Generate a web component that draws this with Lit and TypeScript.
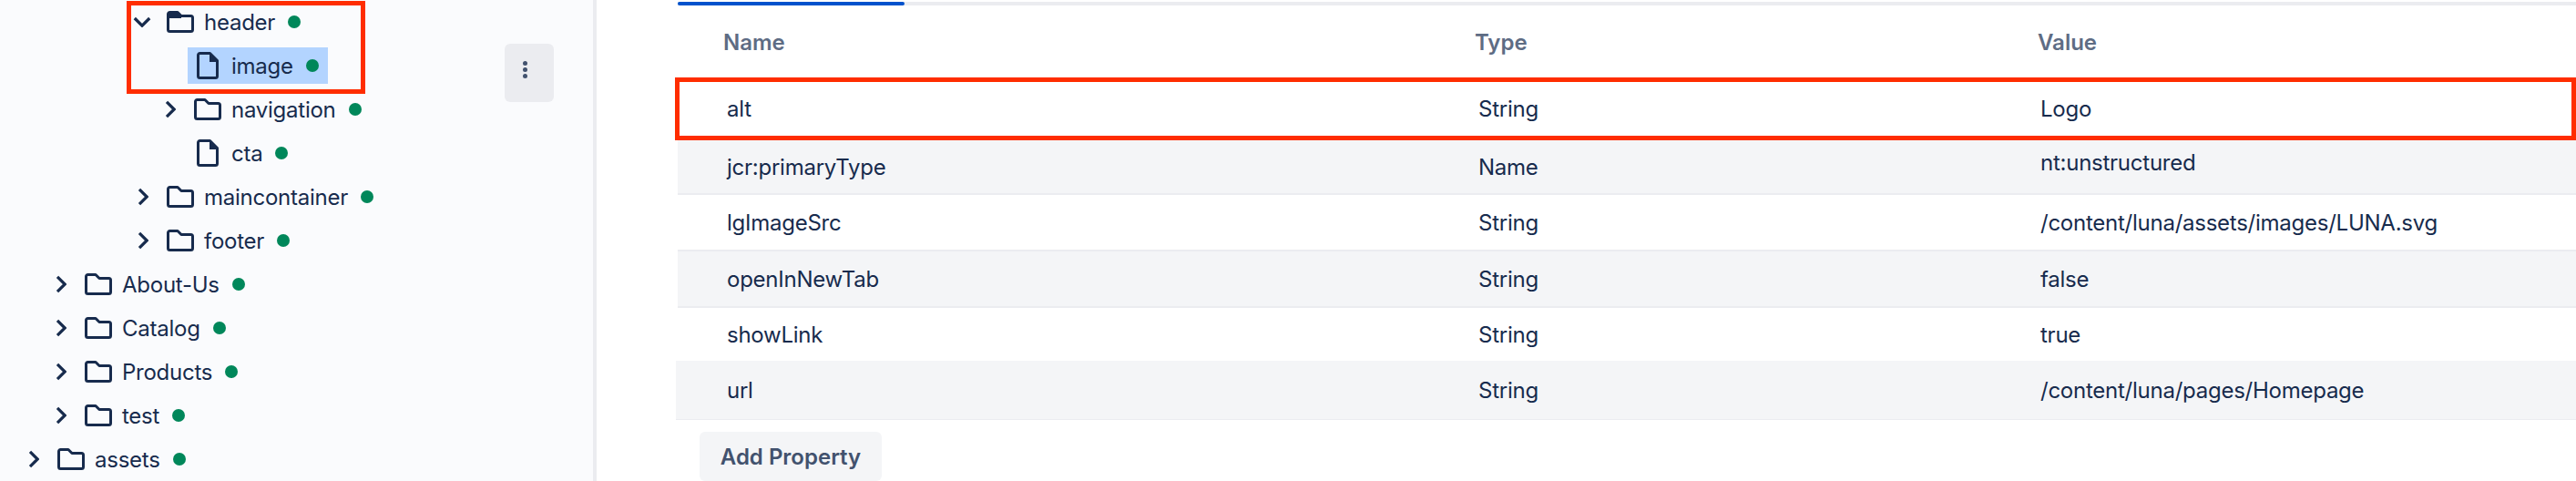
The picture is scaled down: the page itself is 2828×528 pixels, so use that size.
import { css, html, LitElement, svg } from "lit";
import { customElement } from "lit/decorators.js";

interface TreeNode {
	label: string;
	level: number;
	kind: "open" | "closed" | "file";
	selected?: boolean;
}

interface Property {
	name: string;
	type: string;
	value: string;
	raised?: boolean;
}

const TREE: TreeNode[] = [
	{ label: "header", level: 4, kind: "open" },
	{ label: "image", level: 5, kind: "file", selected: true },
	{ label: "navigation", level: 5, kind: "closed" },
	{ label: "cta", level: 5, kind: "file" },
	{ label: "maincontainer", level: 4, kind: "closed" },
	{ label: "footer", level: 4, kind: "closed" },
	{ label: "About-Us", level: 1, kind: "closed" },
	{ label: "Catalog", level: 1, kind: "closed" },
	{ label: "Products", level: 1, kind: "closed" },
	{ label: "test", level: 1, kind: "closed" },
	{ label: "assets", level: 0, kind: "closed" },
];

const PROPERTIES: Property[] = [
	{ name: "alt", type: "String", value: "Logo" },
	{ name: "jcr:primaryType", type: "Name", value: "nt:unstructured", raised: true },
	{ name: "lgImageSrc", type: "String", value: "/content/luna/assets/images/LUNA.svg" },
	{ name: "openInNewTab", type: "String", value: "false" },
	{ name: "showLink", type: "String", value: "true" },
	{ name: "url", type: "String", value: "/content/luna/pages/Homepage" },
];

const chevron = (kind: TreeNode["kind"]) => {
	if (kind === "file") return null;
	const d = kind === "open" ? "M1.8 2 10 10.2 18.2 2" : "M2 1.8 10.2 10 2 18.2";
	const box = kind === "open" ? "0 0 20 12" : "0 0 12 20";
	return html`<svg class=${kind === "open" ? "chev-down" : "chev-right"} viewBox=${box}>
		${svg`<path d=${d} fill="none" stroke="currentColor" stroke-width="3.2" />`}
	</svg>`;
};

const folder = (open: boolean) => html`<svg class="folder" viewBox="0 0 30 24">
	<path
		d="M3.5 1.5H12L16 5.5H26.5A2 2 0 0 1 28.5 7.500V20.500A2 2 0 0 1 26.500 22.500H3.500A2 2 0 0 1 1.500 20.500V3.500A2 2 0 0 1 3.500 1.500Z"
		fill="none"
		stroke="currentColor"
		stroke-width="3"
		stroke-linejoin="round" />
	${open ? svg`<path d="M3 1H12L16 5V8H2V2Z" fill="currentColor" />` : null}
</svg>`;

const file = html`<svg class="file" viewBox="0 0 24 30">
	<path
		d="M3.500 1.500H14.500L22.500 9.500V26.500A2 2 0 0 1 20.500 28.500H3.500A2 2 0 0 1 1.500 26.500V3.500A2 2 0 0 1 3.500 1.500Z"
		fill="none"
		stroke="currentColor"
		stroke-width="3"
		stroke-linejoin="round" />
	<path d="M14 1H15L23 9V11H14Z" fill="currentColor" />
</svg>`;

@customElement("app-root")
export class AppRoot extends LitElement {
	static styles = css`
		:host {
			display: flex;
			height: 528px;
			overflow: hidden;
			background: #fff;
			color: #172b4d;
			font-family: Inter, "Liberation Sans", sans-serif;
			font-size: 24px;
			letter-spacing: -0.25px;
		}

		.sidebar {
			position: relative;
			flex: none;
			width: 651px;
			background: #fafbfd;
			border-right: 4px solid #ebecf0;
		}

		.tree-row {
			display: flex;
			align-items: center;
			height: 48px;
		}

		.slot {
			flex: none;
			display: flex;
			align-items: center;
			justify-content: center;
			width: 20px;
			margin-right: 10px;
		}

		.chev-down {
			width: 20px;
			height: 12px;
		}

		.chev-right {
			width: 12px;
			height: 20px;
			margin-left: 2px;
		}

		.node {
			display: flex;
			align-items: center;
			height: 40px;
			padding: 0 10px 0 7px;
		}

		.node.selected {
			background: #b3d4ff;
		}

		.icon {
			flex: none;
			display: flex;
			justify-content: center;
			width: 30px;
			margin-right: 11px;
		}

		.folder {
			width: 30px;
			height: 24px;
		}

		.file {
			width: 24px;
			height: 30px;
		}

		.dot {
			flex: none;
			width: 14px;
			height: 14px;
			margin-left: 14px;
			border-radius: 50%;
			background: #00875a;
		}

		.kebab {
			position: absolute;
			top: 48px;
			left: 554px;
			display: flex;
			flex-direction: column;
			align-items: center;
			justify-content: center;
			gap: 2px;
			box-sizing: border-box;
			width: 54px;
			height: 64px;
			padding: 0 10px 8px 0;
			border: none;
			border-radius: 6px;
			background: #ebecf0;
		}

		.kebab i {
			width: 5px;
			height: 5px;
			border-radius: 50%;
			background: #42526e;
		}

		.callout {
			position: absolute;
			box-sizing: border-box;
			border: 5px solid #ff2d00;
			pointer-events: none;
		}

		.callout.tree {
			top: 1px;
			left: 139px;
			width: 262px;
			height: 102px;
		}

		.callout.prop {
			inset: 0 0 0 -3px;
		}

		.main {
			flex: 1;
			min-width: 0;
			padding: 2px 0 0 89px;
		}

		.tabs {
			height: 4px;
			background: #ebecf0;
		}

		.tab-active {
			width: 249px;
			height: 4px;
			border-radius: 2px;
			background: #0052cc;
		}

		.table {
			display: grid;
			grid-template-rows: 79px 69px 60px 60px 64px 58px 65px;
		}

		.row {
			position: relative;
			display: grid;
			grid-template-columns: 825px 617px 1fr;
			align-items: center;
			padding-left: 54px;
		}

		.row.head {
			grid-template-columns: 825px 618px 1fr;
			padding: 1px 0 0 50px;
			font-weight: 600;
			color: #5e6c84;
			letter-spacing: 0;
		}

		.row:nth-child(3),
		.row:nth-child(5),
		.row:nth-child(7) {
			background: #f4f5f7;
		}

		.row:nth-child(3) {
			border-bottom: 2px solid #ebecf0;
		}

		.row:nth-child(5) {
			border-top: 2px solid #ebecf0;
			border-bottom: 2px solid #ebecf0;
		}

		.row:nth-child(7) {
			margin-left: -2px;
			padding-left: 56px;
			border-bottom: 1px solid #ebecf0;
		}

		.raised {
			margin-bottom: 10px;
		}

		.add {
			display: block;
			width: 200px;
			height: 54px;
			margin: 13px 0 0 24px;
			padding: 0;
			border: none;
			border-radius: 6px;
			background: #f4f5f7;
			color: #42526e;
			font: 600 24px Inter, "Liberation Sans", sans-serif;
		}
	`;

	private renderNode(node: TreeNode) {
		return html`<div class="tree-row" style="padding-left: ${26 + node.level * 30}px">
			<span class="slot">${chevron(node.kind)}</span>
			<div class="node ${node.selected ? "selected" : ""}">
				<span class="icon">
					${node.kind === "file" ? file : folder(node.kind === "open")}
				</span>
				<span>${node.label}</span>
				<span class="dot"></span>
			</div>
		</div>`;
	}

	private renderProperty(prop: Property, index: number) {
		return html`<div class="row">
			<span>${prop.name}</span>
			<span>${prop.type}</span>
			<span class=${prop.raised ? "raised" : ""}>${prop.value}</span>
			${index === 0 ? html`<div class="callout prop"></div>` : null}
		</div>`;
	}

	protected render() {
		return html`
			<aside class="sidebar">
				${TREE.map((node) => this.renderNode(node))}
				<button class="kebab"><i></i><i></i><i></i></button>
				<div class="callout tree"></div>
			</aside>
			<main class="main">
				<div class="tabs"><div class="tab-active"></div></div>
				<div class="table">
					<div class="row head">
						<span>Name</span>
						<span>Type</span>
						<span>Value</span>
					</div>
					${PROPERTIES.map((prop, index) => this.renderProperty(prop, index))}
				</div>
				<button class="add">Add Property</button>
			</main>
		`;
	}
}
